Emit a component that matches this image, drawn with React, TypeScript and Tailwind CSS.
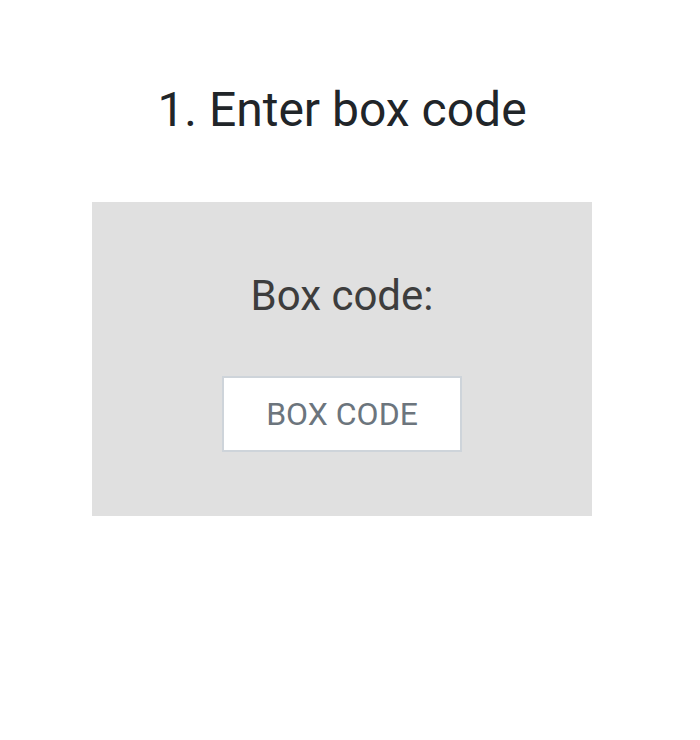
export default function App() {
  return (
    <div className="w-[684px] min-h-[740px] bg-white font-['Roboto',sans-serif] flex flex-col items-center">
      <h1 className="mt-[78px] text-[48px] leading-[64px] text-[#212529]">1. Enter box code</h1>

      <div className="mt-[60px] w-[500px] h-[314px] bg-[#e0e0e0] flex flex-col items-center">
        <label htmlFor="box-code" className="mt-[67px] text-[42px] leading-[54px] text-[#3d3d3d]">
          Box code:
        </label>
        <input
          id="box-code"
          type="text"
          placeholder="BOX CODE"
          className="mt-[53px] w-[240px] h-[76px] bg-white border-2 border-[#ced4da] text-center text-[32px] text-[#495057] placeholder:text-[#6c757d] outline-none"
        />
      </div>
    </div>
  );
}
